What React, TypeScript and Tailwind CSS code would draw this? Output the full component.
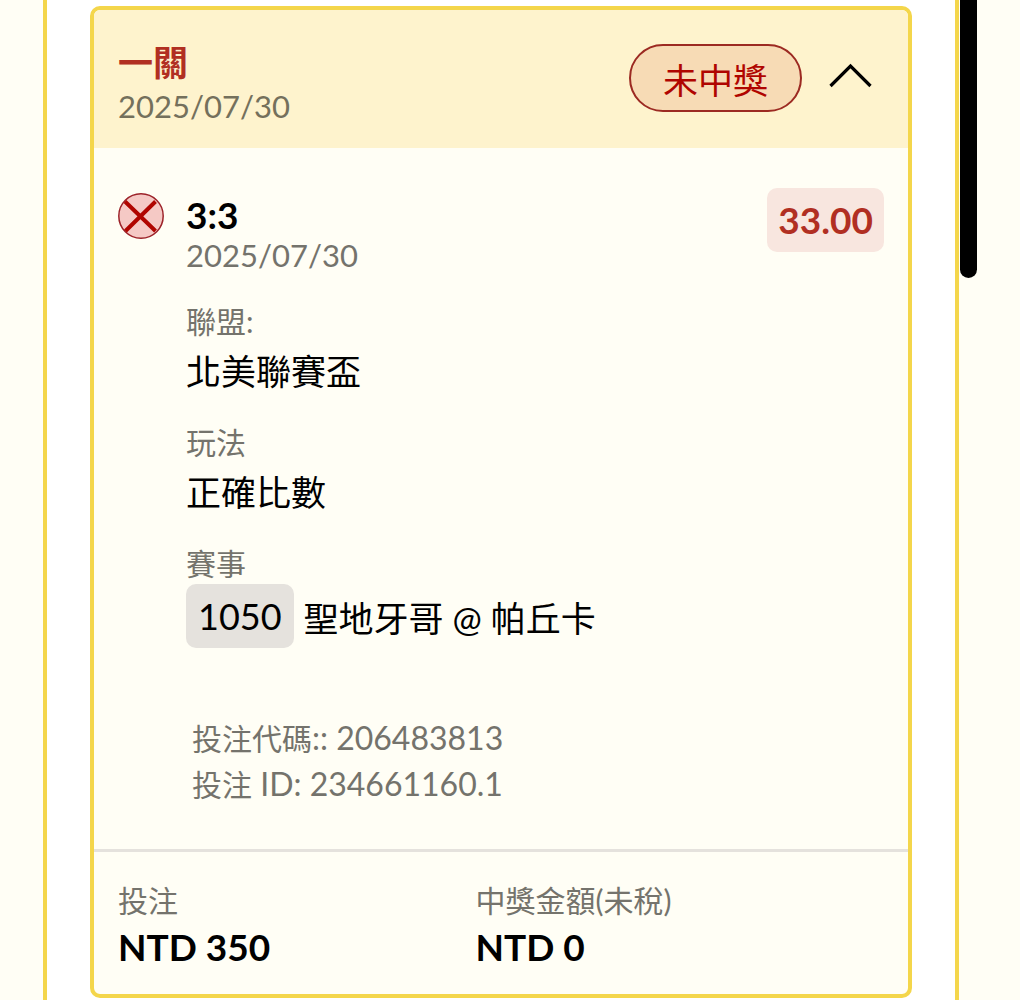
import React, { useState } from 'react';

interface FieldProps {
  label: string;
  children: React.ReactNode;
}

const Field: React.FC<FieldProps> = ({ label, children }) => (
  <div>
    <dt className="text-[30px] leading-10 text-[#74736c]">{label}</dt>
    <dd className="text-[35px] leading-[60px] text-black">{children}</dd>
  </div>
);

const LostIcon = () => (
  <svg viewBox="0 0 46 46" className="w-[46px] h-[46px] shrink-0" role="img" aria-label="未中獎">
    <circle cx="23" cy="23" r="22.2" fill="#f5c9c5" stroke="#9c2229" strokeWidth="1.5" />
    <path d="M7 8.5 L37.5 38 M37.5 8.5 L7.5 38" stroke="#b00500" strokeWidth="4" fill="none" />
  </svg>
);

interface TotalProps {
  label: string;
  amount: string;
  className?: string;
}

const Total: React.FC<TotalProps> = ({ label, amount, className }) => (
  <div className={className}>
    <dt className="text-[30px] leading-10 text-[#74736c]">{label}</dt>
    <dd className="text-[37px] leading-[54px] font-bold text-black">{amount}</dd>
  </div>
);

export default function App() {
  const [open, setOpen] = useState(true);

  return (
    <div className="relative min-h-screen bg-[#fffef5] pl-[43px] pr-[61px] font-[Lato,'Noto_Sans_CJK_TC',sans-serif]">
      <main className="min-h-screen border-x-4 border-[#f4d64b] bg-white pt-1.5 pl-[43px] pr-[43px]">
        <article className="overflow-hidden rounded-[10px] border-4 border-[#f4d64b] bg-[#fffef5]">
          <header className="flex items-start justify-between bg-[#fef3cd] px-6 pt-[30px] pb-5">
            <div>
              <h1 className="text-[35px] leading-[44px] font-bold text-[#b12f22]">一關</h1>
              <time className="block text-[31px] leading-[44px] text-[#74705c]">2025/07/30</time>
            </div>
            <div className="flex items-center pt-1">
              <span className="flex h-[68px] items-center rounded-full border-2 border-[#9c2a22] bg-[#f7dbb5] px-8 pt-1 text-[35px] text-[#b00500]">
                未中獎
              </span>
              <button
                type="button"
                aria-expanded={open}
                aria-label="詳細資料"
                onClick={() => setOpen(!open)}
                className="ml-[26px] mr-3 flex h-[68px] items-center"
              >
                <svg viewBox="0 0 44 26" className={open ? 'mb-1.5 w-11 h-[26px]' : 'mb-1.5 w-11 h-[26px] rotate-180'} fill="none" stroke="#000" strokeWidth="3.2">
                  <path d="M2.5 24 L22.5 4 L42.5 24" />
                </svg>
              </button>
            </div>
          </header>

          {open && (
            <section className="flex items-start gap-[22px] px-6 pt-10 pb-[42px]">
              <div className="pt-[5px]">
                <LostIcon />
              </div>
              <div className="flex-1 pt-[7px]">
                <h2 className="text-[37px] leading-10 font-bold text-black">3:3</h2>
                <time className="block text-[31px] leading-10 text-[#74736c]">2025/07/30</time>
                <dl className="mt-[26px] flex flex-col gap-[21px]">
                  <Field label="聯盟:">北美聯賽盃</Field>
                  <Field label="玩法">正確比數</Field>
                  <Field label="賽事">
                    <span className="flex items-center gap-2.5 pt-px">
                      <span className="flex h-16 items-center rounded-[10px] bg-[#e5e2dd] px-3 text-[36px]">1050</span>
                      <span className="pt-1">聖地牙哥 @ 帕丘卡</span>
                    </span>
                  </Field>
                </dl>
                <div className="mt-[67px] pl-1.5 text-[32px] leading-[46px] text-[#74736c]">
                  <p>
                    <span className="text-[30px]">投注代碼</span>:: 206483813
                  </p>
                  <p>
                    <span className="text-[30px]">投注</span> ID: 234661160.1
                  </p>
                </div>
              </div>
              <span className="flex h-16 items-center rounded-[10px] bg-[#f8e6df] px-[11px] text-[37px] font-bold text-[#b12f22]">
                33.00
              </span>
            </section>
          )}

          <dl className="flex border-t-3 border-[#e5e2dd] px-6 pt-7 pb-5">
            <Total label="投注" amount="NTD 350" className="w-7/15" />
            <Total label="中獎金額(未稅)" amount="NTD 0" />
          </dl>
        </article>
      </main>
      <div className="absolute top-0 right-[43px] h-[278px] w-[17px] rounded-b-full bg-black" />
    </div>
  );
}
